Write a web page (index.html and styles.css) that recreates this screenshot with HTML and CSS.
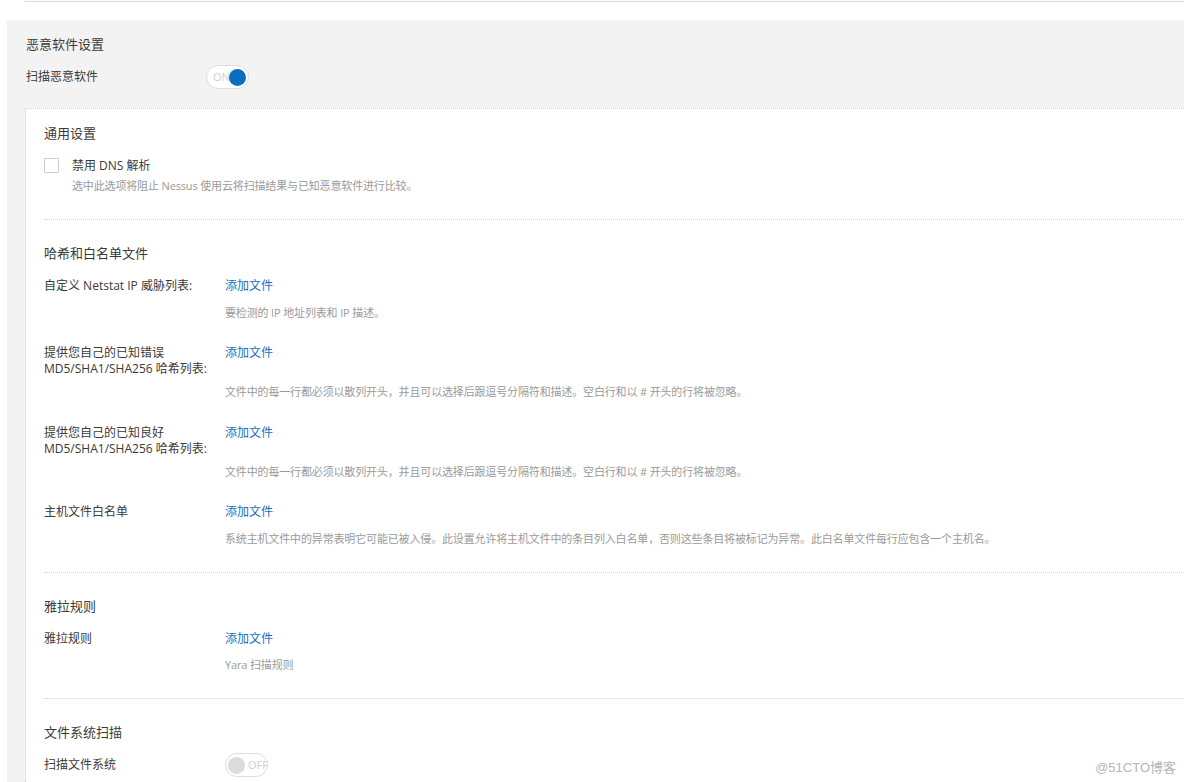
FILE: index.html
```html
<!DOCTYPE html>
<html lang="zh-CN">
<head>
<meta charset="utf-8">
<title>恶意软件设置</title>
<link rel="stylesheet" href="styles.css">
</head>
<body>
<div class="topbar"></div>
<div class="panel">
  <div class="panel-title">恶意软件设置</div>
  <div class="field">
    <div class="field-label">扫描恶意软件</div>
    <div class="toggle on"><span class="toggle-text">ON</span><span class="knob"></span></div>
  </div>

  <div class="box">
    <section class="section">
      <h3 class="sec-title">通用设置</h3>
      <div class="check-row">
        <span class="checkbox"></span>
        <div class="check-body">
          <div class="check-label">禁用 DNS 解析</div>
          <div class="desc">选中此选项将阻止 Nessus 使用云将扫描结果与已知恶意软件进行比较。</div>
        </div>
      </div>
    </section>

    <section class="section">
      <h3 class="sec-title">哈希和白名单文件</h3>
      <div class="row">
        <div class="label">自定义 Netstat IP 威胁列表:</div>
        <a class="link">添加文件</a>
        <div class="desc">要检测的 IP 地址列表和 IP 描述。</div>
      </div>
      <div class="row two">
        <div class="label">提供您自己的已知错误<br>MD5/SHA1/SHA256 哈希列表:</div>
        <a class="link">添加文件</a>
        <div class="desc">文件中的每一行都必须以散列开头，并且可以选择后跟逗号分隔符和描述。空白行和以 # 开头的行将被忽略。</div>
      </div>
      <div class="row two">
        <div class="label">提供您自己的已知良好<br>MD5/SHA1/SHA256 哈希列表:</div>
        <a class="link">添加文件</a>
        <div class="desc">文件中的每一行都必须以散列开头，并且可以选择后跟逗号分隔符和描述。空白行和以 # 开头的行将被忽略。</div>
      </div>
      <div class="row">
        <div class="label">主机文件白名单</div>
        <a class="link">添加文件</a>
        <div class="desc">系统主机文件中的异常表明它可能已被入侵。此设置允许将主机文件中的条目列入白名单，否则这些条目将被标记为异常。此白名单文件每行应包含一个主机名。</div>
      </div>
    </section>

    <section class="section">
      <h3 class="sec-title">雅拉规则</h3>
      <div class="row">
        <div class="label">雅拉规则</div>
        <a class="link">添加文件</a>
        <div class="desc">Yara 扫描规则</div>
      </div>
    </section>

    <section class="section last">
      <h3 class="sec-title">文件系统扫描</h3>
      <div class="field inner">
        <div class="label">扫描文件系统</div>
        <div class="toggle off"><span class="knob"></span><span class="toggle-text">OFF</span></div>
      </div>
    </section>
  </div>
</div>
<div class="watermark">@51CTO博客</div>
</body>
</html>
```
FILE: styles.css
```css
html, body {
  margin: 0;
  padding: 0;
  height: 782px;
  overflow: hidden;
  background: #fff;
}
body {
  font-family: "Open Sans", "Noto Sans CJK SC", sans-serif;
  color: #3a3a3a;
  position: relative;
}
.topbar {
  margin-left: 25px;
  height: 1px;
  border-left: 1px solid #e2e2e2;
  border-bottom: 1px solid #dcdcdc;
}
.panel {
  margin: 18px 0 0 7px;
  background: #f3f3f3;
  padding: 15px 0 0 19px;
  height: 800px;
}
.panel-title {
  font-size: 13px;
  line-height: 18px;
  margin: 0 0 12px;
}
.field {
  display: flex;
  align-items: center;
  height: 24px;
}
.field-label {
  width: 180px;
  font-size: 12px;
  line-height: 16px;
}
.toggle {
  box-sizing: border-box;
  width: 43px;
  height: 24px;
  border: 1px solid #dedede;
  border-radius: 12px;
  background: #fff;
  display: flex;
  align-items: center;
  position: relative;
}
.toggle .knob {
  width: 17px;
  height: 17px;
  border-radius: 50%;
  flex: none;
}
.toggle-text {
  font-family: "Open Sans", sans-serif;
  font-size: 11px;
  color: #d0d0d0;
  line-height: 14px;
}
.toggle.on {
  padding: 0 2px 0 6px;
}
.toggle.on .toggle-text {
  margin-right: -6px;
}
.toggle.on .knob {
  background: #0b6dbf;
  margin-left: auto;
  position: relative;
}
.toggle.off {
  padding: 0 2px 0 2px;
}
.toggle.off .knob {
  background: #dcdcdc;
  margin-right: 3px;
}
.box {
  margin-top: 19px;
  margin-left: -1px;
  background: #fff;
  border-top: 1px dotted #cfcfcf;
  border-left: 1px dotted #cfcfcf;
  padding: 15px 0 0 18px;
  height: 700px;
}
.section {
  border-bottom: 1px dotted #cfcfcf;
  padding-bottom: 25px;
  margin-bottom: 24px;
}
.section.last {
  border-bottom: none;
}
.sec-title {
  font-size: 13px;
  font-weight: normal;
  line-height: 18px;
  margin: 0 0 16px;
}
.check-row {
  display: flex;
  align-items: flex-start;
  margin-top: 0;
}
.checkbox {
  box-sizing: border-box;
  width: 15px;
  height: 15px;
  border: 1px solid #cdcdcd;
  border-radius: 1px;
  background: #fff;
  margin-top: 0;
  margin-right: 13px;
  flex: none;
}
.check-label {
  font-size: 12px;
  line-height: 16px;
}
.desc {
  font-size: 11px;
  line-height: 16px;
  color: #9a9a9a;
  letter-spacing: -0.15px;
}
.check-body .desc {
  margin-top: 4px;
}
.row {
  display: grid;
  grid-template-columns: 181px 1fr;
  grid-template-rows: auto auto;
  row-gap: 10.5px;
  margin-bottom: 24.5px;
}
.row.two {
  row-gap: 7px;
}
.row:last-child {
  margin-bottom: 0;
}
.label {
  font-size: 12px;
  line-height: 16px;
  width: 181px;
  flex: none;
}
.row .label {
  grid-column: 1;
  grid-row: 1;
}
.link {
  grid-column: 2;
  grid-row: 1;
  font-size: 12px;
  line-height: 16px;
  color: #1a6fbd;
  align-self: start;
}
.row .desc {
  grid-column: 2;
  grid-row: 2;
}
.field.inner {
  margin-top: -4px;
}
.watermark {
  position: absolute;
  right: 8px;
  bottom: 6px;
  font-family: "Liberation Sans", "Noto Sans CJK SC", sans-serif;
  font-size: 13px;
  color: #b5b5b5;
}
```
